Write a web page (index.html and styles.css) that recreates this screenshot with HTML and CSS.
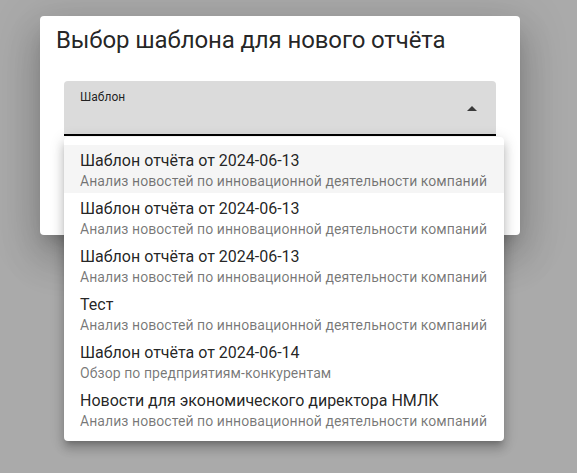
FILE: index.html
```html
<!DOCTYPE html>
<html lang="ru">
<head>
<meta charset="utf-8">
<title>Выбор шаблона</title>
<link rel="stylesheet" href="styles.css">
</head>
<body>
<div class="backdrop">
  <div class="dialog">
    <h2 class="dialog-title">Выбор шаблона для нового отчёта</h2>
    <div class="field">
      <span class="field-label">Шаблон</span>
      <span class="field-arrow"></span>
    </div>
  </div>
  <ul class="menu">
    <li class="menu-item selected">
      <span class="primary">Шаблон отчёта от 2024-06-13</span>
      <span class="secondary">Анализ новостей по инновационной деятельности компаний</span>
    </li>
    <li class="menu-item">
      <span class="primary">Шаблон отчёта от 2024-06-13</span>
      <span class="secondary">Анализ новостей по инновационной деятельности компаний</span>
    </li>
    <li class="menu-item">
      <span class="primary">Шаблон отчёта от 2024-06-13</span>
      <span class="secondary">Анализ новостей по инновационной деятельности компаний</span>
    </li>
    <li class="menu-item">
      <span class="primary">Тест</span>
      <span class="secondary">Анализ новостей по инновационной деятельности компаний</span>
    </li>
    <li class="menu-item">
      <span class="primary">Шаблон отчёта от 2024-06-14</span>
      <span class="secondary">Обзор по предприятиям-конкурентам</span>
    </li>
    <li class="menu-item">
      <span class="primary">Новости для экономического директора НМЛК</span>
      <span class="secondary">Анализ новостей по инновационной деятельности компаний</span>
    </li>
  </ul>
</div>
</body>
</html>
```

FILE: styles.css
```css
* { box-sizing: border-box; }

html, body {
  margin: 0;
  padding: 0;
  height: 100%;
}

body {
  font-family: Roboto, "Liberation Sans", sans-serif;
  background: #aaaaaa;
  color: rgba(0, 0, 0, 0.87);
}

.backdrop {
  position: relative;
  width: 577px;
  height: 473px;
  padding: 16px 0 0 40px;
}

.dialog {
  width: 480px;
  height: 219px;
  background: #fff;
  border-radius: 4px;
  box-shadow: 0 11px 15px -7px rgba(0,0,0,0.2),
              0 24px 38px 3px rgba(0,0,0,0.14),
              0 9px 46px 8px rgba(0,0,0,0.12);
  padding: 8px 0 0 0;
}

.dialog-title {
  margin: 0;
  padding: 0 16px;
  font-size: 24px;
  font-weight: 400;
  line-height: 32px;
  letter-spacing: -0.12px;
  color: rgba(0, 0, 0, 0.87);
}

.field {
  position: relative;
  margin: 25px 0 0 24px;
  width: 432px;
  height: 55px;
  background: #dbdbdb;
  border-radius: 4px 4px 0 0;
  border-bottom: 2px solid #000;
  padding: 8px 16px 0;
}

.field-label {
  display: block;
  font-size: 12px;
  line-height: 16px;
  color: rgba(0, 0, 0, 0.87);
}

.field-arrow {
  position: absolute;
  left: 403px;
  top: 25px;
  width: 0;
  height: 0;
  border-left: 5px solid transparent;
  border-right: 5px solid transparent;
  border-bottom: 5px solid #3a3a3a;
}

.menu {
  position: absolute;
  left: 64px;
  top: 137px;
  width: 440px;
  margin: 0;
  padding: 8px 0;
  list-style: none;
  background: #fff;
  border-radius: 4px;
  box-shadow: 0 5px 5px -3px rgba(0,0,0,0.2),
              0 8px 10px 1px rgba(0,0,0,0.14),
              0 3px 14px 2px rgba(0,0,0,0.12);
}

.menu-item {
  display: flex;
  flex-direction: column;
  height: 48px;
  padding: 6px 16px 2px;
  white-space: nowrap;
}

.menu-item.selected {
  background: #f5f5f5;
}

.primary {
  font-size: 16px;
  line-height: 20px;
  color: rgba(0, 0, 0, 0.87);
}

.secondary {
  font-size: 14px;
  line-height: 20px;
  letter-spacing: 0.06px;
  color: rgba(0, 0, 0, 0.54);
}
```
